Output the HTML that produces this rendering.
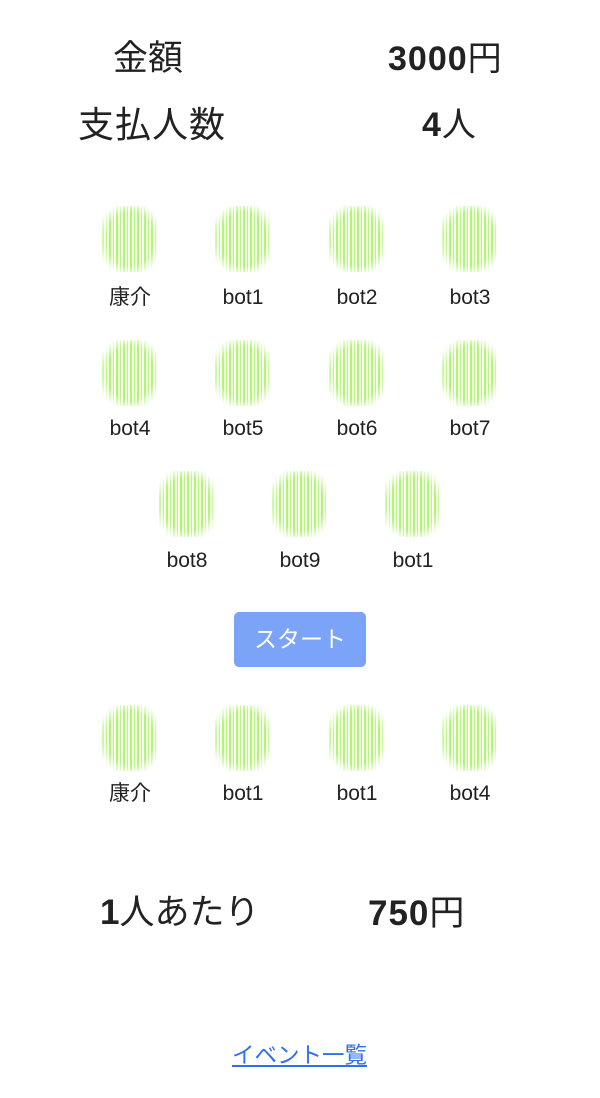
<!DOCTYPE html>
<html><head><meta charset="utf-8"><style>
html,body{margin:0;padding:0;background:#fff;width:600px;height:1098px;overflow:hidden;position:relative;font-family:"Liberation Sans","Noto Sans CJK JP",sans-serif;color:#222}
.t{position:absolute;white-space:nowrap;line-height:1}
.av{position:absolute;width:56px;height:66px;
background:repeating-linear-gradient(90deg,rgba(150,240,80,.75) 0 2px,rgba(220,250,170,.45) 2px 4px,rgba(140,235,60,.6) 4px 5px,rgba(235,250,200,.35) 5px 7px);
-webkit-mask-image:radial-gradient(ellipse 60% 58% at 50% 50%,#000 70%,transparent 100%);mask-image:radial-gradient(ellipse 60% 58% at 50% 50%,#000 70%,transparent 100%)}
.lb{position:absolute;width:100px;text-align:center;font-size:21px;line-height:1}
</style></head><body>
<div class="t" style="left:113px;top:41px;font-size:35px">金額</div>
<div class="t" style="left:388px;top:42px;font-size:34px;font-weight:bold;letter-spacing:1px">3000<span style="font-weight:normal">円</span></div>
<div class="t" style="left:78px;top:107px;font-size:36px;letter-spacing:1px">支払人数</div>
<div class="t" style="left:422px;top:108px;font-size:34px;font-weight:bold;letter-spacing:1px">4<span style="font-weight:normal">人</span></div>

<div class="av" style="left:102px;top:206px"></div><div class="lb" style="left:80px;top:287px">康介</div>
<div class="av" style="left:215px;top:206px"></div><div class="lb" style="left:193px;top:287px">bot1</div>
<div class="av" style="left:329px;top:206px"></div><div class="lb" style="left:307px;top:287px">bot2</div>
<div class="av" style="left:442px;top:206px"></div><div class="lb" style="left:420px;top:287px">bot3</div>

<div class="av" style="left:102px;top:340px"></div><div class="lb" style="left:80px;top:418px">bot4</div>
<div class="av" style="left:215px;top:340px"></div><div class="lb" style="left:193px;top:418px">bot5</div>
<div class="av" style="left:329px;top:340px"></div><div class="lb" style="left:307px;top:418px">bot6</div>
<div class="av" style="left:442px;top:340px"></div><div class="lb" style="left:420px;top:418px">bot7</div>

<div class="av" style="left:159px;top:471px"></div><div class="lb" style="left:137px;top:550px">bot8</div>
<div class="av" style="left:272px;top:471px"></div><div class="lb" style="left:250px;top:550px">bot9</div>
<div class="av" style="left:385px;top:471px"></div><div class="lb" style="left:363px;top:550px">bot1</div>

<div style="position:absolute;left:234px;top:612px;width:132px;height:55px;background:#7ba3f7;border-radius:5px;color:#fff;font-size:23px;text-align:center;line-height:55px">スタート</div>

<div class="av" style="left:102px;top:705px"></div><div class="lb" style="left:80px;top:783px">康介</div>
<div class="av" style="left:215px;top:705px"></div><div class="lb" style="left:193px;top:783px">bot1</div>
<div class="av" style="left:329px;top:705px"></div><div class="lb" style="left:307px;top:783px">bot1</div>
<div class="av" style="left:442px;top:705px"></div><div class="lb" style="left:420px;top:783px">bot4</div>

<div class="t" style="left:100px;top:895px;font-size:35px"><b>1</b>人あたり</div>
<div class="t" style="left:368px;top:896px;font-size:35px;font-weight:bold;letter-spacing:1px">750<span style="font-weight:normal">円</span></div>

<div class="t" style="left:232px;top:1045px;font-size:22.5px;color:#2f6ff0;text-decoration:underline">イベント一覧</div>
</body></html>
